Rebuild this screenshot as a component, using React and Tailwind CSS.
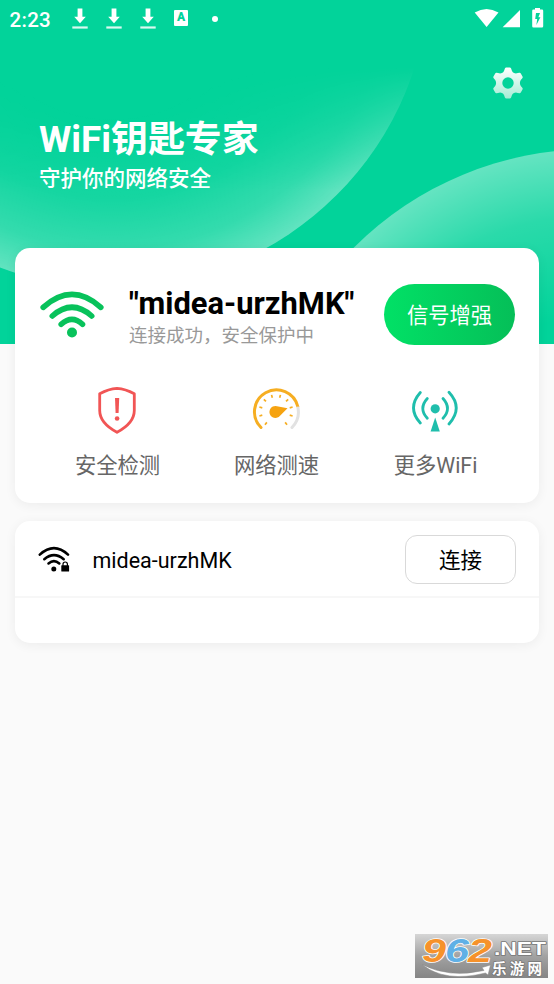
import React from 'react';

const DownloadIcon = () => (
  <svg width="16" height="22" viewBox="0 0 16 22" fill="#fff">
    <path d="M5.6 0.5h4.8v8.300h3.400L8 15.200 2.200 8.800h3.400z" />
    <rect x="0.3" y="18.400" width="15.400" height="2.200" opacity="0.85" />
  </svg>
);

const StatusBar = () => (
  <div className="flex h-[38px] items-center justify-between pl-[9.5px] pr-[10px]">
    <div className="flex items-center">
      <span className="w-[62px] pt-[1px] text-[20.5px] font-medium leading-[38px] tracking-[0.3px] text-white">2:23</span>
      <div className="flex gap-[18px]">
        <DownloadIcon />
        <DownloadIcon />
        <DownloadIcon />
      </div>
      <div className="-mt-[2px] ml-[18.5px] flex h-[16px] w-[14px] flex-col items-center rounded-[1px] bg-white">
        <span className="text-[12px] font-black leading-[15px] text-[#02d39a]">A</span>
      </div>
      <div className="ml-[23.5px] h-[6px] w-[6px] rounded-full bg-white" />
    </div>
    <svg width="70" height="20" viewBox="0 0 70 20" fill="#fff" className="-mt-[2px] shrink-0">
      <path d="M0.700 4.500Q12.500 -2.500 24.500 4.500L12.600 19z" />
      <path d="M46 2v17.300H28.600z" />
      <path
        fillRule="evenodd"
        d="M61 0h5v1.600h2a1.200 1.200 0 0 1 1.200 1.200v15.500a1.200 1.200 0 0 1-1.200 1.200h-8.600a1.200 1.200 0 0 1-1.200-1.200V2.800a1.200 1.200 0 0 1 1.200-1.200H61zM62 5l-.8 6h2l-.8 6 4-7.800h-2l1.600-4.200z"
      />
    </svg>
  </div>
);

const HeaderBackground = () => (
  <svg className="absolute inset-0" width="554" height="344" viewBox="0 0 554 344">
    <defs>
      <radialGradient id="leftGlow" gradientUnits="userSpaceOnUse" cx="112" cy="-30" r="318">
        <stop offset="0.45" stopColor="#fff" stopOpacity="0" />
        <stop offset="0.72" stopColor="#fff" stopOpacity="0.08" />
        <stop offset="0.88" stopColor="#fff" stopOpacity="0.2" />
        <stop offset="1" stopColor="#fff" stopOpacity="0.38" />
      </radialGradient>
      <radialGradient id="rightGlow" gradientUnits="userSpaceOnUse" cx="592" cy="486" r="337">
        <stop offset="0.5" stopColor="#fff" stopOpacity="0" />
        <stop offset="0.8" stopColor="#fff" stopOpacity="0.16" />
        <stop offset="1" stopColor="#fff" stopOpacity="0.39" />
      </radialGradient>
      <linearGradient id="fade" gradientUnits="userSpaceOnUse" x1="0" y1="66" x2="0" y2="190">
        <stop offset="0" stopColor="#000" />
        <stop offset="1" stopColor="#fff" />
      </linearGradient>
      <mask id="fadeMask" maskUnits="userSpaceOnUse" x="0" y="0" width="554" height="344">
        <rect width="554" height="344" fill="url(#fade)" />
      </mask>
    </defs>
    <circle cx="112" cy="-30" r="318" fill="url(#leftGlow)" mask="url(#fadeMask)" />
    <circle cx="592" cy="486" r="337" fill="url(#rightGlow)" />
  </svg>
);

const GearIcon = () => (
  <svg width="32" height="32" viewBox="0 0 32 32">
    <defs>
      <linearGradient id="gear" x1="0" y1="0" x2="0" y2="1">
        <stop offset="0" stopColor="#fff" />
        <stop offset="1" stopColor="#a5ecd5" />
      </linearGradient>
    </defs>
    <path
      fill="url(#gear)"
      fillRule="evenodd"
      d="M14.300 0.600h3.400q1 0 1.400 1l.9 2.300q.6 1.400 2 2 1.300.7 2.800.4l2.400-.5q1.100-.2 1.600.7l1.700 3q.5.900-.2 1.700l-1.500 1.900q-.9 1.300-.9 2.900t.9 2.900l1.500 1.900q.7.800.2 1.700l-1.700 3q-.5.900-1.600.7l-2.400-.5q-1.500-.3-2.800.4-1.400.6-2 2l-.9 2.300q-.4 1-1.400 1h-3.400q-1 0-1.400-1l-.9-2.300q-.6-1.400-2-2-1.300-.7-2.800-.4l-2.400.5q-1.100.2-1.600-.7l-1.700-3q-.5-.9.200-1.700l1.500-1.900q.9-1.300.9-2.900t-.9-2.900l-1.500-1.900q-.7-.8-.2-1.700l1.700-3q.5-.9 1.600-.7l2.400.5q1.500.3 2.800-.4 1.400-.6 2-2l.9-2.300q.4-1 1.400-1zM16 10.300a5.700 5.700 0 1 0 0 11.400 5.700 5.700 0 0 0 0-11.400z"
    />
  </svg>
);

const WifiIcon = () => (
  <svg width="66" height="50" viewBox="0 0 66 50" fill="none" stroke="#08c25b" strokeWidth="5.600" strokeLinecap="round">
    <path d="M4.200 17.300Q33 -8.500 61.800 17.300" />
    <path d="M13.300 26Q33 8.500 52.700 26" />
    <path d="M22.200 34.300Q33 24.500 43.500 34.300" />
    <circle cx="33" cy="42.500" r="5" fill="#08c25b" stroke="none" />
  </svg>
);

const WifiLockIcon = () => (
  <svg width="32" height="27" viewBox="0 0 32 27" fill="none" stroke="#000" strokeWidth="2.600" strokeLinecap="round">
    <path d="M1.800 8.600Q16 -4.300 30 8.600" />
    <path d="M6.300 13.200Q16 5 25.700 13.200" />
    <path d="M10.500 17.400Q16 13 21.300 17.400" />
    <circle cx="15.800" cy="23" r="2.500" fill="#000" stroke="none" />
    <rect x="23.300" y="19.200" width="7.800" height="6.300" rx="0.600" fill="#000" stroke="none" />
    <path d="M25 19.500v-1.300a2.200 2.200 0 0 1 4.400 0v1.300" strokeWidth="1.200" />
  </svg>
);

const ShieldIcon = () => (
  <svg width="48" height="48" viewBox="0 0 48 48" fill="none">
    <path
      d="M24 2.400Q32.500 3 41.300 7.800V24.500C41.300 34.500 32 42 24 46.300 16 42 6.700 34.500 6.700 24.500V7.800Q15.500 3 24 2.400z"
      stroke="#f15555"
      strokeWidth="2.800"
      strokeLinejoin="round"
    />
    <path d="M22 12h4.200l-.6 15h-3z" fill="#f15555" />
    <circle cx="24.100" cy="32.500" r="2.300" fill="#f15555" />
  </svg>
);

const tickAngles = [-140, -105, -75, -45, -15, 15, 45, 75, 105, 140];

const SpeedIcon = () => (
  <svg width="50" height="48" viewBox="0 0 50 48" fill="none">
    <path d="M10 41.500A22 22 0 1 1 46.800 20.500" stroke="#f6ae22" strokeWidth="3" strokeLinecap="round" />
    <path d="M47 22A22 22 0 0 1 41 41.500" stroke="#e2e2e2" strokeWidth="3" strokeLinecap="round" />
    {tickAngles.map((a) => (
      <path key={a} d="M25 8.300v3" stroke="#f6ae22" strokeWidth="1.700" transform={`rotate(${a} 25 25.500)`} />
    ))}
    <path d="M36.500 22.300 L26 20.200A6 6 0 1 0 29.300 29.500z" fill="#f6a310" />
  </svg>
);

const AntennaIcon = () => (
  <svg width="50" height="48" viewBox="0 0 50 48" fill="none" stroke="#1fbeac" strokeWidth="2.800" strokeLinecap="round">
    <path d="M10.300 6.500Q-3.300 22 10.300 37" />
    <path d="M39 6.300Q53.500 22 39 38" />
    <path d="M17.300 12.500Q8.300 22.500 17.300 32.300" />
    <path d="M33 12.500Q42 22.500 33 32.300" />
    <circle cx="25.200" cy="22.800" r="4.600" fill="#1fbeac" stroke="none" />
    <path d="M25.200 31.500 29.800 45.500h-9.200z" fill="#1fbeac" stroke="none" />
  </svg>
);

const actions = [
  { label: '安全检测', icon: <ShieldIcon /> },
  { label: '网络测速', icon: <SpeedIcon /> },
  { label: '更多WiFi', icon: <AntennaIcon /> },
];

const Watermark = () => (
  <div className="absolute left-[415px] top-[934px] h-[44px] w-[133px] bg-linear-to-b from-[#d6d6d6] via-[#a2a2a2] to-[#858585]">
    <svg width="133" height="44" viewBox="0 0 133 44" className="overflow-visible">
      <g fontFamily="Liberation Sans, sans-serif" fontWeight="700" strokeLinejoin="round" paintOrder="stroke">
        <g fontSize="33" fontStyle="italic" strokeWidth="1.500" stroke="#fff">
          <text x="7" y="27.500" fill="#f6922b" textLength="24" lengthAdjust="spacingAndGlyphs">9</text>
          <text x="30" y="27.500" fill="#5fb0e6" textLength="24" lengthAdjust="spacingAndGlyphs">6</text>
          <text x="53" y="27.500" fill="#f6922b" textLength="24" lengthAdjust="spacingAndGlyphs">2</text>
        </g>
        <text x="79" y="21" fontSize="18" fill="#fff" stroke="#777" strokeWidth="1.500" textLength="52" lengthAdjust="spacingAndGlyphs">.NET</text>
        <text x="77" y="39.500" fontSize="14.500" fill="#fff" stroke="#777" strokeWidth="1.500" textLength="50" fontFamily="Noto Sans CJK SC, sans-serif">乐游网</text>
      </g>
      <path d="M7 30.500Q34 44.500 69 36.500L67 33.500 75.500 31 73 41 70.500 39Q30 49 7 30.500z" fill="#fff" stroke="#888" strokeWidth="0.500" />
    </svg>
  </div>
);

export default function App() {
  return (
    <div className="relative h-[984px] w-[554px] overflow-hidden bg-[#fafafa] font-['Roboto','Noto_Sans_CJK_SC',sans-serif]">
      <header className="relative h-[344px] bg-[#02d39a]">
        <HeaderBackground />
        <div className="relative">
          <StatusBar />
          <div className="flex justify-end pr-[30px] pt-[29px]">
            <GearIcon />
          </div>
          <div className="pl-[39px] pt-[17px] text-white">
            <h1 className="whitespace-nowrap text-[36.900px] font-bold leading-[48px]">WiFi钥匙专家</h1>
            <p className="text-[21.500px] font-medium leading-[30px]">守护你的网络安全</p>
          </div>
        </div>
      </header>

      <main className="relative -mt-[96px] flex flex-col gap-[18px] px-[15px]">
        <section className="h-[255px] w-[524px] rounded-[15px] bg-white shadow-[0_2px_12px_rgba(0,0,0,0.06)]">
          <div className="flex h-[102px] items-start pl-[24px] pr-[24px] pt-[36px]">
            <div className="pt-[6px]">
              <WifiIcon />
            </div>
            <div className="ml-[24px] flex-1 whitespace-nowrap pt-[1px]">
              <div className="text-[30.900px] font-bold leading-[37px] text-black">"midea-urzhMK"</div>
              <div className="text-[18.500px] leading-[28px] text-[#999]">连接成功，安全保护中</div>
            </div>
            <button className="h-[61px] w-[131px] shrink-0 rounded-full bg-linear-to-r from-[#01e166] to-[#05bf58] pt-[2px] text-[21.300px] text-white">信号增强</button>
          </div>
          <div className="flex pl-[22px] pt-[36px]">
            {actions.map((item) => (
              <div key={item.label} className="flex w-[159px] flex-col items-center">
                {item.icon}
                <span className="ml-[2px] mt-[16px] text-[21.300px] leading-[32px] text-[#666]">{item.label}</span>
              </div>
            ))}
          </div>
        </section>

        <section className="h-[122px] w-[524px] rounded-[15px] bg-white shadow-[0_2px_12px_rgba(0,0,0,0.06)]">
          <div className="flex h-[77px] items-center border-b-2 border-[#f7f7f7] pl-[23px] pr-[23px] pt-[2px]">
            <WifiLockIcon />
            <span className="ml-[22.500px] flex-1 pt-[4px] text-[21.500px] text-black">midea-urzhMK</span>
            <button className="h-[49px] w-[111px] rounded-[12px] border border-[#d9d9d9] bg-white pt-[4px] text-[21.500px] text-black">连接</button>
          </div>
        </section>
      </main>

      <Watermark />
    </div>
  );
}
